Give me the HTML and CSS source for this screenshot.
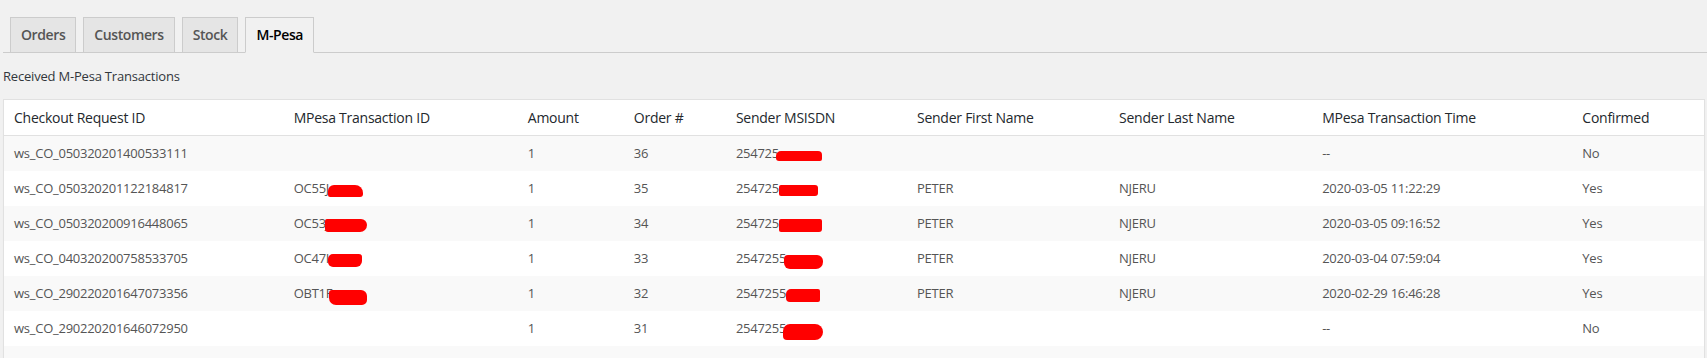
FILE: index.html
```html
<!DOCTYPE html>
<html>
<head>
<meta charset="utf-8">
<link rel="stylesheet" href="styles.css">
</head>
<body>
<div class="wrap">
  <nav class="tabs">
    <a class="tab">Orders</a>
    <a class="tab">Customers</a>
    <a class="tab">Stock</a>
    <a class="tab active">M-Pesa</a>
  </nav>
  <p class="caption">Received M-Pesa Transactions</p>
  <table class="grid">
    <colgroup>
      <col class="c1"><col class="c2"><col class="c3"><col class="c4"><col class="c5"><col class="c6"><col class="c7"><col class="c8"><col class="c9">
    </colgroup>
    <thead>
      <tr>
        <th>Checkout Request ID</th>
        <th>MPesa Transaction ID</th>
        <th>Amount</th>
        <th>Order #</th>
        <th>Sender MSISDN</th>
        <th>Sender First Name</th>
        <th>Sender Last Name</th>
        <th>MPesa Transaction Time</th>
        <th>Confirmed</th>
      </tr>
    </thead>
    <tbody>
      <tr>
        <td>ws_CO_050320201400533111</td>
        <td></td>
        <td>1</td>
        <td>36</td>
        <td>254725<span class="redact m1"></span></td>
        <td></td>
        <td></td>
        <td>--</td>
        <td>No</td>
      </tr>
      <tr>
        <td>ws_CO_050320201122184817</td>
        <td>OC55J<span class="redact t2"></span></td>
        <td>1</td>
        <td>35</td>
        <td>254725<span class="redact m2"></span></td>
        <td>PETER</td>
        <td>NJERU</td>
        <td>2020-03-05 11:22:29</td>
        <td>Yes</td>
      </tr>
      <tr>
        <td>ws_CO_050320200916448065</td>
        <td>OC53J<span class="redact t3"></span></td>
        <td>1</td>
        <td>34</td>
        <td>254725<span class="redact m3"></span></td>
        <td>PETER</td>
        <td>NJERU</td>
        <td>2020-03-05 09:16:52</td>
        <td>Yes</td>
      </tr>
      <tr>
        <td>ws_CO_040320200758533705</td>
        <td>OC47I<span class="redact t4"></span></td>
        <td>1</td>
        <td>33</td>
        <td>2547255<span class="redact m4"></span></td>
        <td>PETER</td>
        <td>NJERU</td>
        <td>2020-03-04 07:59:04</td>
        <td>Yes</td>
      </tr>
      <tr>
        <td>ws_CO_290220201647073356</td>
        <td>OBT1F<span class="redact t5"></span></td>
        <td>1</td>
        <td>32</td>
        <td>2547255<span class="redact m5"></span></td>
        <td>PETER</td>
        <td>NJERU</td>
        <td>2020-02-29 16:46:28</td>
        <td>Yes</td>
      </tr>
      <tr>
        <td>ws_CO_290220201646072950</td>
        <td></td>
        <td>1</td>
        <td>31</td>
        <td>2547255<span class="redact m6"></span></td>
        <td></td>
        <td></td>
        <td>--</td>
        <td>No</td>
      </tr>
      <tr>
        <td>&nbsp;</td>
        <td></td>
        <td></td>
        <td></td>
        <td></td>
        <td></td>
        <td></td>
        <td></td>
        <td></td>
      </tr>
    </tbody>
  </table>
</div>
</body>
</html>
```

FILE: styles.css
```css
html, body {
  margin: 0;
  padding: 0;
  background: #f1f1f1;
  font-family: "Open Sans", "Noto Sans", sans-serif;
  color: #444;
  overflow: hidden;
}

.wrap {
  padding: 17px 0 0 3px;
}

.tabs {
  display: flex;
  border-bottom: 1px solid #ccc;
  height: 35px;
}

.tab {
  display: block;
  box-sizing: border-box;
  height: 36px;
  margin-left: 7px;
  padding: 5px 10px;
  border: 1px solid #ccc;
  background: #e5e5e5;
  color: #555;
  font-size: 14px;
  line-height: 24px;
  font-weight: 600;
  letter-spacing: -0.4px;
}

.tab.active {
  background: #f1f1f1;
  border-bottom-color: #f1f1f1;
  color: #000;
}

.caption {
  margin: 14px 0 0 0;
  font-size: 13px;
  line-height: 19px;
  color: #32373c;
  letter-spacing: -0.2px;
}

.grid {
  margin-top: 13px;
  width: 1702px;
  table-layout: fixed;
  border-collapse: collapse;
  border: 1px solid #e1e1e1;
  background: #fff;
  box-shadow: 0 1px 1px rgba(0, 0, 0, 0.04);
}

.c1 { width: 280px; }
.c2 { width: 234px; }
.c3 { width: 106px; }
.c4 { width: 102px; }
.c5 { width: 181px; }
.c6 { width: 202px; }
.c7 { width: 203px; }
.c8 { width: 260px; }
.c9 { width: 132px; }

.grid th {
  text-align: left;
  font-weight: 400;
  font-size: 14px;
  line-height: 19px;
  padding: 8px 10px;
  color: #23282d;
  border-bottom: 1px solid #e1e1e1;
  letter-spacing: -0.25px;
  white-space: nowrap;
}

.grid td {
  font-size: 13px;
  line-height: 19px;
  padding: 8px 10px;
  color: #555;
  letter-spacing: -0.25px;
  white-space: nowrap;
  height: 19px;
}

.grid tbody tr:nth-child(odd) {
  background: #f9f9f9;
}

.redact {
  display: inline-block;
  background: #ff0000;
  vertical-align: middle;
  position: relative;
  border-radius: 3px 7px 5px 6px / 3px 6px 6px 5px;
}

.t2 { width: 35px; height: 12px; margin-left: -1px; top: 1px; border-radius: 6px 8px 3px 2px; }
.t3 { width: 42px; height: 13px; margin-left: -4px; top: 1px; border-radius: 2px 6px 7px 3px; }
.t4 { width: 34px; height: 13px; margin-left: -1px; top: 1px; border-radius: 5px 3px 6px 5px; }
.t5 { width: 38px; height: 15px; margin-left: -3px; top: 3px; border-radius: 3px 6px 5px 7px; }

.m1 { width: 46px; height: 10px; margin-left: -3px; top: 1px; border-radius: 5px 4px 2px 3px; }
.m2 { width: 39px; height: 11px; margin-left: 0; top: 1px; border-radius: 2px 3px 3px 2px; }
.m3 { width: 43px; height: 13px; margin-left: 0; top: 1px; border-radius: 2px 2px 3px 2px; }
.m4 { width: 39px; height: 14px; margin-left: -2px; top: 2px; border-radius: 4px 6px 7px 6px; }
.m5 { width: 34px; height: 13px; margin-left: 0; top: 1px; border-radius: 5px 2px 2px 4px; }
.m6 { width: 40px; height: 16px; margin-left: -3px; top: 2px; border-radius: 7px 8px 8px 4px; }
```
